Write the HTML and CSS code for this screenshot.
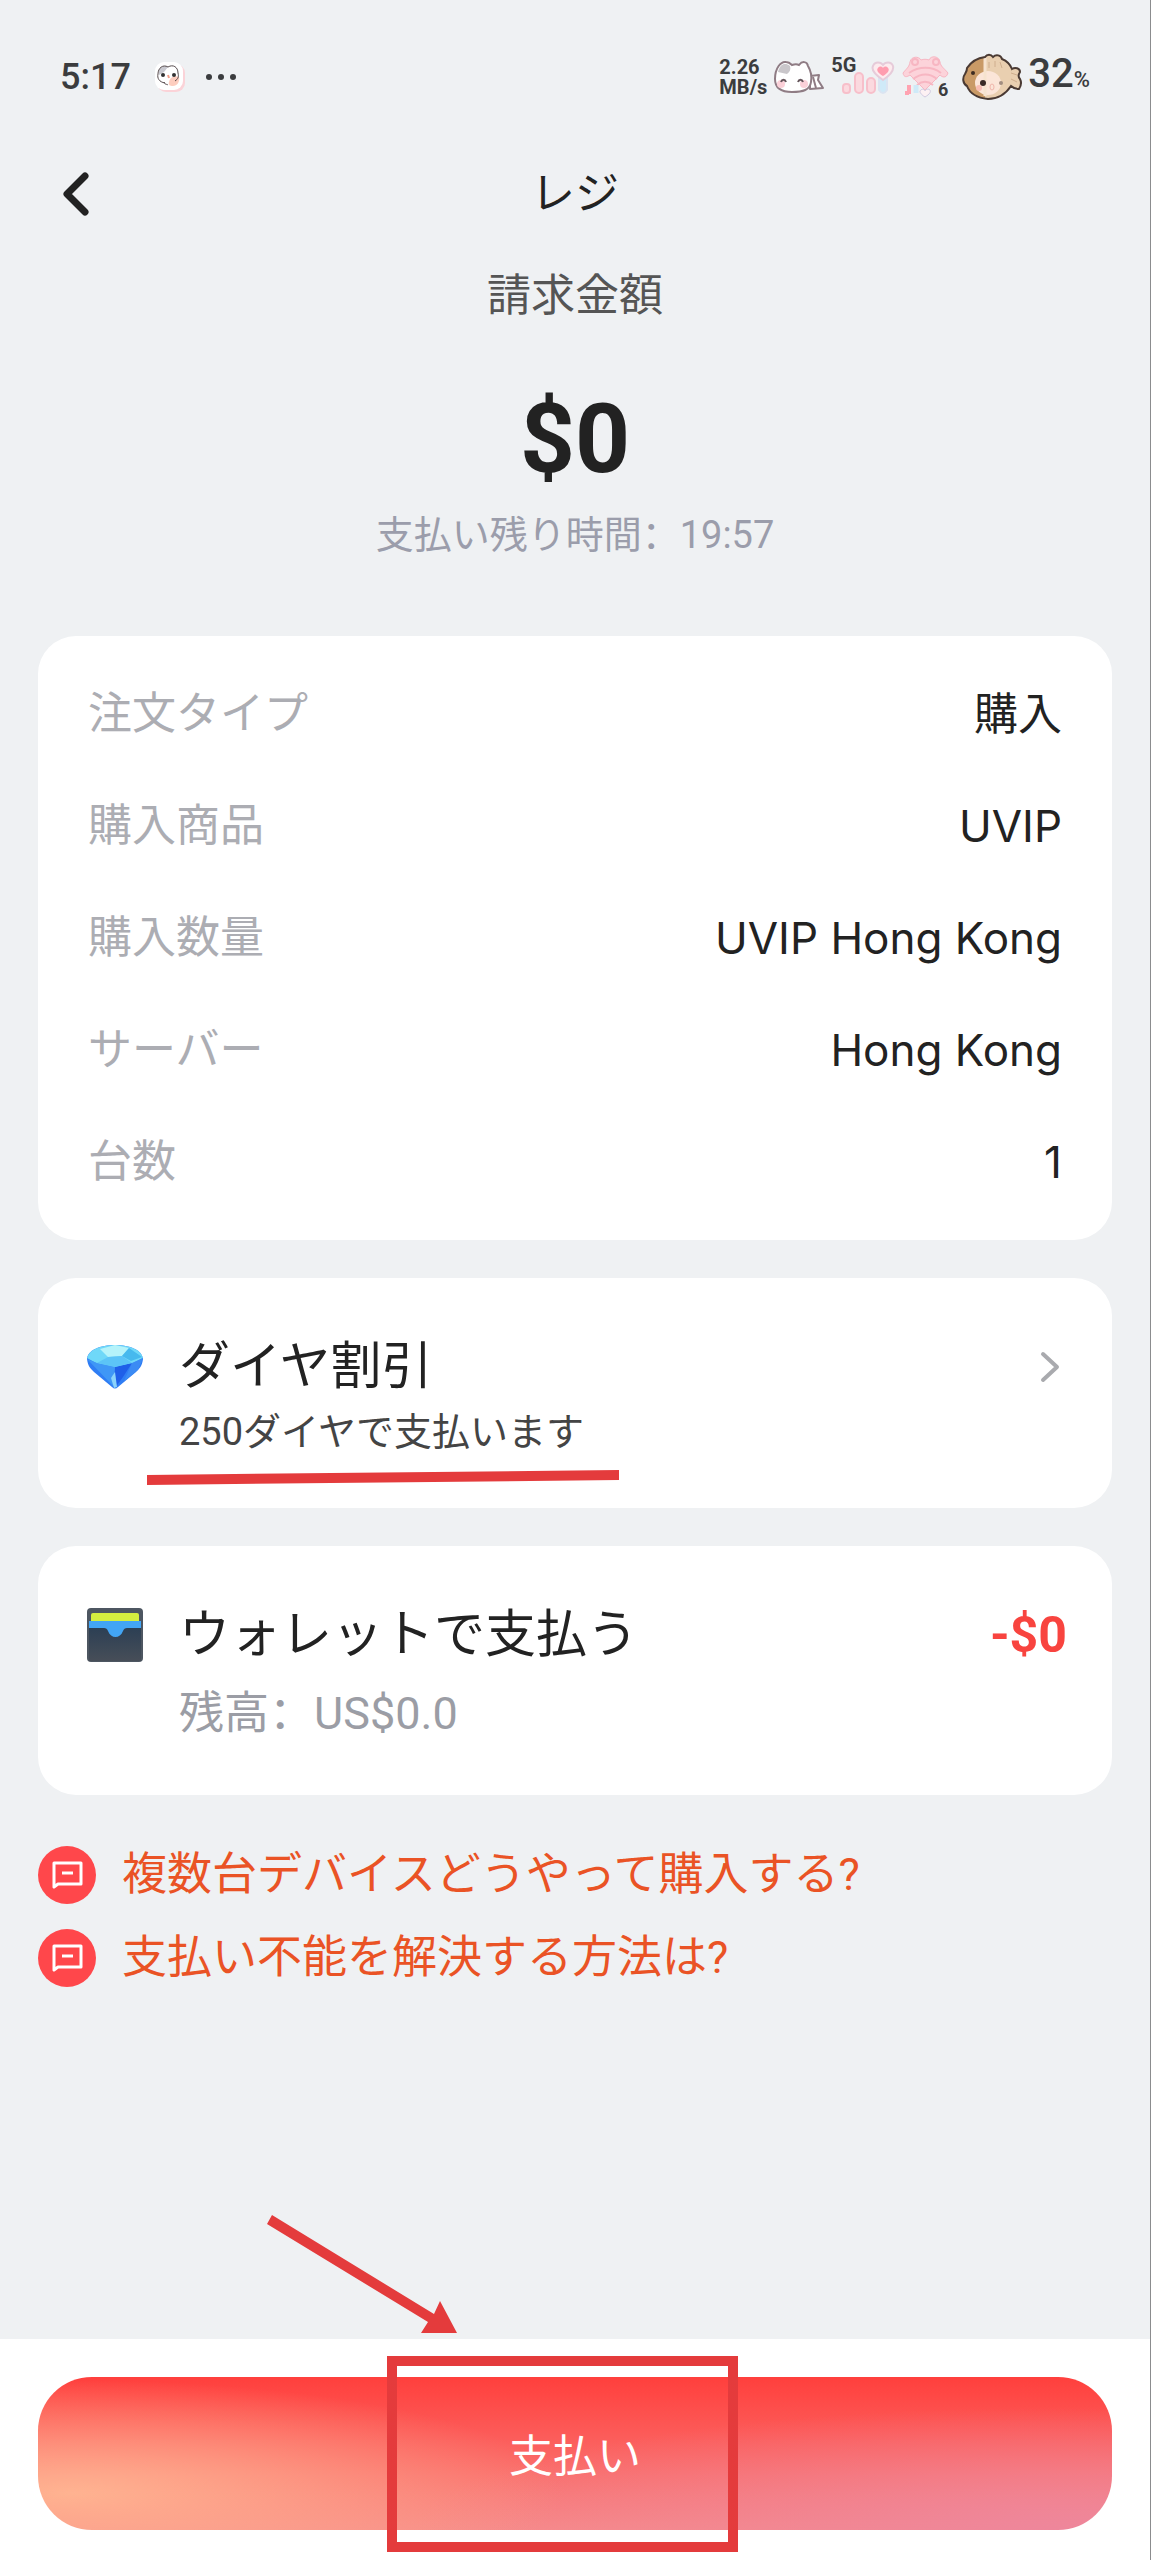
FILE: index.html
```html
<!DOCTYPE html>
<html lang="ja">
  <head>
    <meta charset="UTF-8">
    <meta name="viewport" content="width=device-width, initial-scale=1">
    <title>レジ</title>
    <link rel="stylesheet" href="styles.css">
  </head>
<body>
	<div class="status">
		<div class="status-side">
			<span class="clock">5:17</span>
			<svg class="app-icon" width="30" height="30" viewBox="0 0 30 30">
				<rect x="2" y="2" width="28" height="28" rx="9" fill="#fbd3d8"/>
				<rect x="0" y="0" width="28" height="28" rx="9" fill="#fff"/>
				<path d="M14 20c1-5 6-7 10-5 1 5-2 9-6 9-3 0-5-1-4-4z" fill="#fdcdbf"/>
				<path d="M4 9c1-5 6-6 9-4l-4 5-5 3z" fill="#c9c9d0"/>
				<path d="M10 21c-6-1-8-5-7-9 0-6 5-10 10-7 5-3 10 0 10 6 1 4 0 6-3 8M9 20c1 3 3 2 4 3" fill="none" stroke="#554a4c" stroke-width="1"/>
				<circle cx="8" cy="13" r="2" fill="#333"/><circle cx="19" cy="13" r="2" fill="#333"/>
				<path d="M13 13l1 3" stroke="#f2a08c" stroke-width="2"/>
			</svg>
			<svg width="32" height="8" viewBox="0 0 32 8" fill="#3b3c3e">
				<circle cx="4" cy="4" r="3"/><circle cx="16" cy="4" r="3"/><circle cx="28" cy="4" r="3"/>
			</svg>
		</div>
		<div class="status-side right">
			<div class="speed">
				<span>2.26</span>
				<span>MB/s</span>
			</div>
			<svg width="54" height="36" viewBox="0 0 54 36">
				<path d="M38 17l9-1-1 5 5 8-13 1z" fill="#fff" stroke="#8f7c84" stroke-width="2" stroke-linejoin="round"/>
				<path d="M41 18l3 11" stroke="#8f7c84" stroke-width="2"/>
				<path d="M3 20C3 9 9 2 14 3c3 0 5 2 6 3 3-1 5-1 7 0 3-4 8-4 9 1 3 5 4 10 3 16-1 8-8 10-19 10S3 29 3 20z" fill="#fff" stroke="#8f7c84" stroke-width="2"/>
				<path d="M6 13c2-8 7-10 12-6 1 3 0 6-3 8-3-1-6-1-9-2z" fill="#c9c6ca"/>
				<circle cx="9" cy="25" r="4" fill="#fbd0d8"/><circle cx="32" cy="25" r="4" fill="#fbd0d8"/>
				<path d="M9 23c1-3 4-3 5 0M26 23c1-3 4-3 5 0" fill="none" stroke="#66565c" stroke-width="2"/>
			</svg>
			<div class="signal">
				<span class="net">5G</span>
				<svg width="54" height="36" viewBox="0 0 54 36" fill="#fbd9df" stroke="#f7bfca" stroke-width="2">
					<rect x="2" y="25" width="7" height="9" rx="3"/>
					<rect x="14" y="14" width="8" height="20" rx="4"/>
					<rect x="26" y="19" width="8" height="15" rx="4"/>
					<path d="M38 14h8v17q-4 6-8 0z" fill="#cfeaf8" stroke="#dbe4f1"/>
					<path d="M42 21C33 15 30 11 32 7c2-5 8-4 10-1 2-3 8-4 10 1 1 4-1 8-10 14z" fill="#fdebee" stroke="#e6cbd9"/>
					<path d="M42 17c-5-3-7-6-5-8 1-2 4-2 5 0 1-2 4-2 5 0 2 2 0 5-5 8z" fill="#ff9daf" stroke="none"/>
				</svg>
			</div>
			<div class="wifi">
				<svg width="50" height="44" viewBox="0 0 50 44" fill="none" stroke="#f7b6c2">
					<path d="M3 18C8 12 9 12 10 7c1-6 9-6 11-2 3-1 5-1 8 0 2-5 10-4 11 2 1 5 3 5 8 11-2 6-6 4-8 2L25 35 10 20c-3 2-6 3-7-2z" fill="#fcd3da" stroke-width="1"/>
					<circle cx="15" cy="7" r="3" stroke-width="2"/><circle cx="36" cy="7" r="3" stroke-width="2"/>
					<path d="M9 18c10-7 23-7 32 0M13 24c8-6 17-6 24 0M17 30c5-4 11-4 16 0" stroke-width="2"/>
					<path d="M9 30v9M5 38h4" stroke="#ffa3b1" stroke-width="4"/>
					<path d="M16 30v8" stroke="#cfeaf8" stroke-width="5"/>
					<path d="M25 42c-5-3-6-6-4-7 2-2 4 0 4 1 0-1 3-3 5-1 1 2 0 4-5 7z" fill="#fdf1f3" stroke="#cfc9e0" stroke-width="1"/>
				</svg>
				<span class="band">6</span>
			</div>
			<svg class="fish" width="62" height="48" viewBox="0 0 62 48">
				<path d="M24 4c2-3 6-3 8 0 3-3 8-2 9 2 5 2 8 5 10 10 3-2 8-1 8 3-2 3-2 5 0 7 2 4 1 7-1 10-4 0-6-1-8-3C44 42 36 46 27 46 17 45 9 41 6 33c-4-2-5-8-2-12 1-2 2-3 2-6C10 9 16 5 24 4z" fill="#e9cfb0"/>
				<path d="M24 4V45C14 44 9 40 6 33c-4-2-5-8-2-12 1-2 2-3 2-6C10 9 16 5 24 4z" fill="#c99a66"/>
				<ellipse cx="27" cy="30" rx="13" ry="12" fill="#fbe5d8"/>
				<path d="M24 5v38" stroke="#f6e3cf" stroke-width="3"/>
				<path d="M24 4c2-3 6-3 8 0 3-3 8-2 9 2 5 2 8 5 10 10 3-2 8-1 8 3-2 3-2 5 0 7 2 4 1 7-1 10-4 0-6-1-8-3C44 42 36 46 27 46 17 45 9 41 6 33c-4-2-5-8-2-12 1-2 2-3 2-6C10 9 16 5 24 4z" fill="none" stroke="#4a3a33" stroke-width="2"/>
				<path d="M28 9v6M34 8v6M39 9l2 6M50 20l6 2M50 26l6 3" stroke="#cfae8e" stroke-width="1"/>
				<circle cx="12" cy="20" r="2" fill="#3e2c22"/><circle cx="22" cy="30" r="3" fill="#3a2a26"/><circle cx="40" cy="30" r="2" fill="#a18d80"/>
				<ellipse cx="31" cy="34" rx="2" ry="3" fill="none" stroke="#f0b6ac"/>
				<circle cx="18" cy="35" r="3" fill="#f8bdb2"/>
			</svg>
			<span class="battery">32<small>%</small></span>
		</div>
	</div>

	<header class="topbar">
		<button type="button" class="back" aria-label="戻る">
			<svg width="32" height="50" viewBox="0 0 32 50"><path d="M25 7L7 25l18 18" fill="none" stroke="#222" stroke-width="7" stroke-linecap="round" stroke-linejoin="round"/></svg>
		</button>
		<h1>レジ</h1>
	</header>

	<main>
		<section class="amount">
			<p class="amount-label">請求金額</p>
			<p class="amount-value">$0</p>
			<p class="amount-time">支払い残り時間<span class="colon" lang="zh-CN">：</span>19:57</p>
		</section>

		<dl class="card details">
			<div class="row"><dt>注文タイプ</dt><dd>購入</dd></div>
			<div class="row"><dt>購入商品</dt><dd>UVIP</dd></div>
			<div class="row"><dt>購入数量</dt><dd>UVIP Hong Kong</dd></div>
			<div class="row"><dt>サーバー</dt><dd>Hong Kong</dd></div>
			<div class="row"><dt>台数</dt><dd>1</dd></div>
		</dl>

		<button type="button" class="card option">
			<svg class="option-icon" width="58" height="66" viewBox="0 0 58 66">
				<path d="M1 25C2 16 14 11 29 11s27 5 28 14c-1 7-3 9-7 13L32 53q-3 3-6 0L8 38C4 34 2 32 1 25z" fill="#2f7df4"/>
				<path d="M1 24C3 16 14 11 29 11s26 5 28 13l-10 5-18 4-19-4z" fill="#6fd8f8"/>
				<path d="M14 15l15-4 14 3-7 8-14 1z" fill="#b5f3fa"/>
				<path d="M43 14l13 9-11 4-9-5z" fill="#46b9ee"/>
				<path d="M1 25l10 4 18 4-2 19z" fill="#3f97f6"/>
				<path d="M29 33l17-4-9 14-8 11z" fill="#1f5fe9"/>
				<path d="M46 29l11-5-5 12-14 11z" fill="#3b8bf4"/>
				<path d="M11 29l11-6 14-1 10 7-17 4z" fill="#5cc4f7"/>
				<path d="M25 44l4-6 2 15-3 1z" fill="#8bd3fb"/>
			</svg>
			<span class="option-text">
				<span class="option-title">ダイヤ割引</span>
				<span class="option-sub discount">250ダイヤで支払います
					<svg class="underline" viewBox="0 0 472 15" preserveAspectRatio="none"><path d="M0 5L472 0V10L0 15z" fill="#e43b3c"/></svg>
				</span>
			</span>
			<svg class="chevron" width="24" height="36" viewBox="0 0 24 36"><path d="M5 5l14 13L5 31" fill="none" stroke="#a9aaae" stroke-width="4" stroke-linecap="round" stroke-linejoin="round"/></svg>
		</button>

		<div class="card option wallet">
			<svg class="option-icon" width="58" height="66" viewBox="0 0 58 66">
				<defs>
					<linearGradient id="leather" x1="0" y1="0" x2="0" y2="1"><stop offset="0" stop-color="#2c3f54"/><stop offset="1" stop-color="#474e58"/></linearGradient>
				</defs>
				<rect x="1" y="6" width="56" height="54" rx="4" fill="#4d5661"/>
				<rect x="5" y="11" width="48" height="14" rx="2" fill="#d5ee3f"/>
				<rect x="3" y="19" width="52" height="20" fill="#42a5f5"/>
				<path d="M3 26h15q3 0 4 3c3 8 12 8 15 0q1-3 4-3h14v33H3z" fill="url(#leather)"/>
			</svg>
			<div class="option-text">
				<div class="option-title">ウォレットで支払う</div>
				<div class="option-sub balance">残高<span class="colon" lang="zh-CN">：</span>US$0.0</div>
			</div>
			<strong class="price">-$0</strong>
		</div>

		<nav class="faq">
			<a href="#devices">
				<svg width="58" height="58" viewBox="0 0 58 58"><circle cx="29" cy="29" r="29" fill="#ff474b"/><path d="M16 41V17h27v21H20z" fill="none" stroke="#fff" stroke-width="3" stroke-linejoin="round"/><path d="M24 27h11" stroke="#fff" stroke-width="3"/></svg>
				<span>複数台デバイスどうやって購入する?</span>
			</a>
			<a href="#trouble">
				<svg width="58" height="58" viewBox="0 0 58 58"><circle cx="29" cy="29" r="29" fill="#ff474b"/><path d="M16 41V17h27v21H20z" fill="none" stroke="#fff" stroke-width="3" stroke-linejoin="round"/><path d="M24 27h11" stroke="#fff" stroke-width="3"/></svg>
				<span>支払い不能を解決する方法は?</span>
			</a>
		</nav>
	</main>

	<footer class="paybar">
		<button type="button" class="pay">支払い</button>
		<div class="frame"></div>
		<svg class="arrow" width="190" height="118" viewBox="0 0 190 118" fill="#e43b3c"><path d="M5 0L167 99l6-13 17 32h-36l7-11L0 9z"/></svg>
	</footer>
</body>
</html>
```
FILE: styles.css
```css
*{
	box-sizing: border-box;
}
body{
	display: flex;
	flex-direction: column;
	min-height: 100vh;
	margin: 0;
	border-right: 1px solid #8b8c8e;
	background: #eff1f3;
	color: #222;
	font-family: Roboto, "Noto Sans CJK JP", sans-serif;
	font-size: 44px;
	line-height: 64px;
}
h1, p, dl, dd{
	margin: 0;
}
button{
	border: 0;
	color: inherit;
	font: inherit;
	cursor: pointer;
}
svg{
	display: block;
	flex: none;
}
/* full-width colon that sits low and to the left */
.colon{
	font-family: "Noto Sans CJK SC", sans-serif;
	line-height: 1;
}

/* status bar */
.status{
	display: flex;
	justify-content: space-between;
	height: 154px;
	padding: 0 60px;
	color: #3b3c3e;
	font-weight: 500;
}
.status-side{
	display: flex;
	align-items: center;
}
.clock{
	font-size: 36px;
}
.app-icon{
	margin: 0 20px 0 24px;
}
.right{
	gap: 5px;
}
.speed{
	display: flex;
	flex-direction: column;
	font-size: 20px;
	font-weight: 700;
	line-height: 20px;
}
.signal{
	position: relative;
	padding-left: 10px;
}
.net{
	position: absolute;
	top: -4px;
	left: 0;
	font-size: 20px;
	font-weight: 700;
	line-height: 20px;
}
.wifi{
	position: relative;
}
.band{
	position: absolute;
	right: 2px;
	bottom: 0;
	font-size: 18px;
	font-weight: 700;
	line-height: 18px;
}
.fish{
	margin-left: 6px;
}
.battery{
	font-size: 40px;
}
.battery small{
	font-size: 22px;
}

/* title */
.topbar{
	display: grid;
	grid-template-columns: 1fr auto 1fr;
	align-items: center;
	padding: 8px 60px;
}
.back{
	justify-self: start;
	padding: 0;
	background: none;
}
.topbar h1{
	font-size: 44px;
	font-weight: 400;
}

main{
	display: flex;
	flex-direction: column;
	gap: 38px;
	padding: 30px 38px;
}
.amount{
	text-align: center;
}
.amount-label{
	color: #555;
}
.amount-value{
	margin: 51px 0 4px;
	font-size: 96px;
	font-weight: 700;
	line-height: 120px;
}
.amount-time{
	margin-bottom: 31px;
	color: #9b9dab;
	font-size: 38px;
}

.card{
	border-radius: 38px;
	background: #fff;
}
.details{
	padding: 22px 50px;
}
.row{
	display: flex;
	justify-content: space-between;
	align-items: center;
	height: 112px;
}
.row dt{
	color: #acadb3;
}
.row dd{
	font-family: Inter, "Noto Sans CJK JP", sans-serif;
}

/* payment methods */
.option{
	display: flex;
	align-items: flex-start;
	width: 100%;
	padding: 56px 50px 44px 48px;
	text-align: left;
}
.option-text{
	flex: 1;
	margin-left: 35px;
}
.option-title,
.option-sub{
	display: block;
}
.option-title{
	font-size: 51px;
	line-height: 66px;
}
.option-sub{
	font-size: 45px;
}
.discount{
	position: relative;
	color: #444;
	font-size: 38px;
}
.underline{
	position: absolute;
	top: 70px;
	left: -32px;
	width: 472px;
	height: 15px;
}
.chevron{
	margin: 15px 0;
}
.balance{
	margin-top: 14px;
	color: #9b9da5;
}
.wallet{
	padding-right: 45px;
	padding-bottom: 49px;
}
.price{
	color: #f8443f;
	font-size: 50px;
	line-height: 66px;
}

.faq{
	display: grid;
	gap: 25px;
	padding-top: 13px;
}
.faq a{
	display: flex;
	align-items: center;
	gap: 26px;
	height: 58px;
	color: #ea5325;
	font-size: 45px;
	text-decoration: none;
}

/* pay button */
.paybar{
	position: relative;
	margin-top: auto;
	padding: 38px 38px 30px;
	background: #fff;
}
.pay{
	width: 100%;
	height: 153px;
	padding-top: 8px;
	border-radius: 54px;
	background:
		radial-gradient(ellipse 46% 74% at 3% 76%, #ffb391, rgba(255,179,145,0)),
		radial-gradient(ellipse 60% 80% at 95% 100%, #ee869b, rgba(238,134,155,0)),
		linear-gradient(#ff3f3c, #f78a88);
	color: #fff;
}
.frame{
	position: absolute;
	top: 17px;
	left: 387px;
	width: 351px;
	height: 196px;
	border: 10px solid #e43b3c;
	pointer-events: none;
}
.arrow{
	position: absolute;
	top: -124px;
	left: 267px;
}
```
